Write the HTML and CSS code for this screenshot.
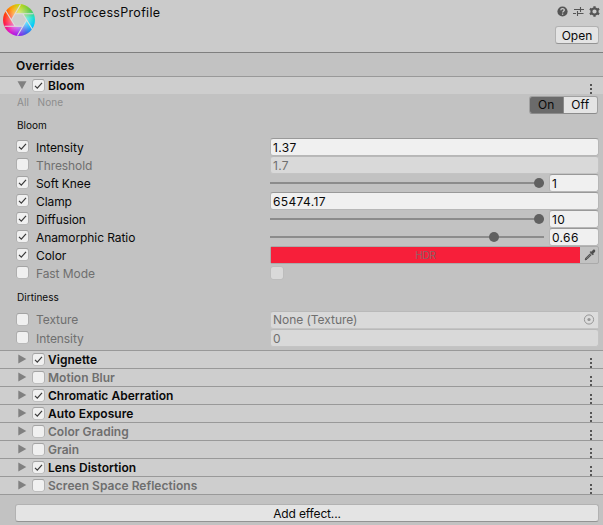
FILE: index.html
```html
<!DOCTYPE html>
<html lang="en">
<head>
<meta charset="utf-8">
<title>PostProcessProfile</title>
<link rel="stylesheet" href="styles.css">
</head>
<body>
<header class="asset">
  <svg class="logo" width="32" height="32" viewBox="0 0 32 32">
    <foreignObject width="32" height="32"><div class="wheel"></div></foreignObject>
    <path d="M12.2 9.7H19.8L23.6 16L19.8 22.3H12.2L8.4 16Z" fill="#cecece"/>
    <path d="M19.8 22.3H1.5M12.2 22.3L2.5 6.5M8.4 16L17.5 .5M12.2 9.7H30.5M19.8 9.7L29.5 25.5M23.6 16L14.5 31.5" stroke="#dedede" stroke-width="1.1"/>
  </svg>
  <h1 class="title">PostProcessProfile</h1>
  <div class="tools">
    <div class="icons">
      <svg width="11" height="11" viewBox="0 0 11 11"><circle cx="5.5" cy="5.5" r="5.1" fill="#555"/><path d="M3.8 4.2C3.8 2 7.3 2 7.3 4.1C7.3 5.3 5.6 5.2 5.6 6.6M5.6 7.5V8.8" fill="none" stroke="#cbcbcb" stroke-width="1.3"/></svg>
      <svg width="11" height="11" viewBox="0 0 11 11"><path d="M1 3.5H7M8 3.5H11M7.5 1V6M0 7.5H3M4 7.5H10.5M4.5 5V10" fill="none" stroke="#555" stroke-width="1.1"/></svg>
      <svg width="11" height="11" viewBox="0 0 11 11"><circle cx="5.5" cy="5.5" r="3.1" fill="none" stroke="#555" stroke-width="2"/><path d="M5.5 .2V2M5.5 9V10.8M.9 2.85L2.5 3.8M8.5 7.2L10.1 8.15M.9 8.15L2.5 7.2M8.5 3.8L10.1 2.85" stroke="#555" stroke-width="2.3"/></svg>
    </div>
    <button class="btn open">Open</button>
  </div>
</header>
<h2 class="overrides">Overrides</h2>
<section class="effect on">
  <svg class="arrow down" width="10" height="9" viewBox="0 0 10 9"><path d="M.5 .3H9.5L5 8.3Z"/></svg>
  <i class="check"><svg viewBox="0 0 11 11"><path d="M2 5.8L4.3 8.2L9 2.8"/></svg></i><span>Bloom</span><i class="dots"></i>
</section>
<main class="body">
  <div class="bar"><span class="link">All</span><span class="link">None</span><div class="seg"><b class="sel">On</b><b>Off</b></div></div>
  <h3 class="sub first">Bloom</h3>
  <div class="row"><i class="check"><svg viewBox="0 0 11 11"><path d="M2 5.8L4.3 8.2L9 2.8"/></svg></i><label>Intensity</label><div class="field">1.37</div></div>
  <div class="row off"><i class="check"></i><label>Threshold</label><div class="field">1.7</div></div>
  <div class="row"><i class="check"><svg viewBox="0 0 11 11"><path d="M2 5.8L4.3 8.2L9 2.8"/></svg></i><label>Soft Knee</label><div class="track"><i class="knob" style="left:264px"></i></div><div class="field num">1</div></div>
  <div class="row"><i class="check"><svg viewBox="0 0 11 11"><path d="M2 5.8L4.3 8.2L9 2.8"/></svg></i><label>Clamp</label><div class="field">65474.17</div></div>
  <div class="row"><i class="check"><svg viewBox="0 0 11 11"><path d="M2 5.8L4.3 8.2L9 2.8"/></svg></i><label>Diffusion</label><div class="track"><i class="knob" style="left:264px"></i></div><div class="field num">10</div></div>
  <div class="row"><i class="check"><svg viewBox="0 0 11 11"><path d="M2 5.8L4.3 8.2L9 2.8"/></svg></i><label>Anamorphic Ratio</label><div class="track"><i class="knob" style="left:219px"></i></div><div class="field num">0.66</div></div>
  <div class="row"><i class="check"><svg viewBox="0 0 11 11"><path d="M2 5.8L4.3 8.2L9 2.8"/></svg></i><label>Color</label><div class="color"><span class="hdr">HDR</span><svg width="12" height="12" viewBox="0 0 12 12"><path d="M7.2 2.8L9 .9C10.3-.2 12 1.4 10.9 2.9L9.2 4.7L9.8 5.4L8.8 6.3L5.6 3.1L6.5 2.2Z" fill="#4d4d4d"/><path d="M6.3 4.5L1.8 9L1.2 10.9L3 10.2L7.5 5.7" fill="#777" stroke="#4d4d4d"/></svg></div></div>
  <div class="row off"><i class="check"></i><label>Fast Mode</label><i class="check value"></i></div>
  <h3 class="sub second">Dirtiness</h3>
  <div class="row off up"><i class="check"></i><label>Texture</label><div class="field obj"><span>None (Texture)</span><svg width="18" height="16" viewBox="0 0 18 16"><path d="M0 0H18V16H0Z" fill="#dcdcdc"/><circle cx="9" cy="7.5" r="4.6" fill="none" stroke="#969696"/><circle cx="9" cy="7.5" r="1.6" fill="#969696"/></svg></div></div>
  <div class="row off"><i class="check"></i><label>Intensity</label><div class="field">0</div></div>
</main>
<section class="effect on"><svg class="arrow" width="9" height="10" viewBox="0 0 9 10"><path d="M.3 .5L8.3 5L.3 9.5Z"/></svg><i class="check"><svg viewBox="0 0 11 11"><path d="M2 5.8L4.3 8.2L9 2.8"/></svg></i><span>Vignette</span><i class="dots"></i></section>
<section class="effect"><svg class="arrow" width="9" height="10" viewBox="0 0 9 10"><path d="M.3 .5L8.3 5L.3 9.5Z"/></svg><i class="check"></i><span>Motion Blur</span><i class="dots"></i></section>
<section class="effect on"><svg class="arrow" width="9" height="10" viewBox="0 0 9 10"><path d="M.3 .5L8.3 5L.3 9.5Z"/></svg><i class="check"><svg viewBox="0 0 11 11"><path d="M2 5.8L4.3 8.2L9 2.8"/></svg></i><span>Chromatic Aberration</span><i class="dots"></i></section>
<section class="effect on"><svg class="arrow" width="9" height="10" viewBox="0 0 9 10"><path d="M.3 .5L8.3 5L.3 9.5Z"/></svg><i class="check"><svg viewBox="0 0 11 11"><path d="M2 5.8L4.3 8.2L9 2.8"/></svg></i><span>Auto Exposure</span><i class="dots"></i></section>
<section class="effect"><svg class="arrow" width="9" height="10" viewBox="0 0 9 10"><path d="M.3 .5L8.3 5L.3 9.5Z"/></svg><i class="check"></i><span>Color Grading</span><i class="dots"></i></section>
<section class="effect"><svg class="arrow" width="9" height="10" viewBox="0 0 9 10"><path d="M.3 .5L8.3 5L.3 9.5Z"/></svg><i class="check"></i><span>Grain</span><i class="dots"></i></section>
<section class="effect on"><svg class="arrow" width="9" height="10" viewBox="0 0 9 10"><path d="M.3 .5L8.3 5L.3 9.5Z"/></svg><i class="check"><svg viewBox="0 0 11 11"><path d="M2 5.8L4.3 8.2L9 2.8"/></svg></i><span>Lens Distortion</span><i class="dots"></i></section>
<section class="effect"><svg class="arrow" width="9" height="10" viewBox="0 0 9 10"><path d="M.3 .5L8.3 5L.3 9.5Z"/></svg><i class="check"></i><span>Screen Space Reflections</span><i class="dots"></i></section>
<footer class="foot"><button class="btn add">Add effect...</button></footer>
</body>
</html>
```
FILE: styles.css
```css
* { box-sizing: border-box; }
body {
  margin: 0;
  height: 525px;
  overflow: hidden;
  background: #c2c2c2;
  color: #090909;
  font: 12px/18px Inter, "Liberation Sans", sans-serif;
  letter-spacing: 0;
}
h1, h2, h3 { margin: 0; }
svg { display: block; flex: none; }

.asset {
  display: flex;
  height: 53px;
  padding: 4px 4px 0 3px;
  background: #cbcbcb;
  border-bottom: 1px solid #7f7f7f;
}
.wheel {
  width: 32px;
  height: 32px;
  border-radius: 50%;
  background: radial-gradient(circle, rgba(255,255,255,.5) 25%, transparent 65%),
    conic-gradient(#c5d916, #60c848 50deg, #20dfcf 80deg, #00c8ff 115deg, #4263e8 150deg, #9e20ed 185deg, #e019c5 220deg, #ff1a4d 255deg, #ff3c10 290deg, #ff9700 325deg, #c5d916);
}
.title { margin: 0 0 0 8px; font-size: 12.5px; font-weight: 400; line-height: 18px; letter-spacing: .32px; }
.tools { margin-left: auto; }
.icons { display: flex; gap: 5px; justify-content: flex-end; padding: 2px 0 0 0; margin-right: -1px; }
.btn {
  display: block;
  height: 18px;
  padding: 0;
  border: 1px solid #b2b2b2;
  border-bottom-color: #939393;
  border-radius: 3px;
  background: #e4e4e4;
  color: #090909;
  font: inherit;
  line-height: 17px;
  letter-spacing: -.15px;
  text-align: center;
}
.open { width: 44px; margin-top: 9px; letter-spacing: 0; }
.overrides { height: 23px; padding: 4px 0 0 16px; font-size: 12px; font-weight: 600; line-height: 18px; letter-spacing: .15px; }

.effect {
  display: flex;
  height: 18px;
  padding-left: 17px;
  border-top: 1px solid #999;
  background: #cecece;
  color: #6f6f6f;
  font-weight: 600;
  letter-spacing: .03px;
}
.effect.on { color: #090909; }
.effect .check { margin: 3px 5px 0 6px; }
.arrow { margin: 3px 0 0 1px; fill: #808080; }
.effect .arrow + .check { margin-right: 4px; }
.arrow.down { margin: 4px -1px 0 0; }
.effect .arrow.down + .check { margin-left: 6.5px; margin-right: 4.5px; }
.dots {
  width: 2px;
  height: 10px;
  margin: 7px 11px 0 auto;
  background: repeating-linear-gradient(#555 0 2px, transparent 2px 4px);
}
.check {
  flex: none;
  width: 11px;
  height: 11px;
  border-radius: 2px;
  background: #f0f0f0;
  box-shadow: 0 0 0 .5px #b0b0b0, 0 -.5px 0 .5px #999;
}
.check path { fill: none; stroke: #3a3a3a; stroke-width: 1.2; }

.body { height: 256px; padding: 0 4px 0 17px; }
.bar { display: flex; height: 23px; font-size: 10px; line-height: 17px; color: #8d8d8d; letter-spacing: .1px; }
.link { margin-right: 8.5px; }
.seg {
  display: flex;
  width: 69px;
  height: 18px;
  margin: 2px 1px 0 auto;
  border: 1px solid #a0a0a0;
  border-bottom-color: #8b8b8b;
  border-radius: 3px;
  overflow: hidden;
  color: #090909;
  font-size: 12px;
  line-height: 16px;
  text-align: center;
}
.seg b { width: 34px; font-weight: 400; background: #e4e4e4; }
.seg .sel { background: #6b6b6b; border-right: 1px solid #8b8b8b; }
.sub { font-size: 10px; font-weight: 400; line-height: 18px; letter-spacing: .03px; }
.first { height: 21px; line-height: 17px; }
.second { height: 29px; padding-top: 6px; }
.row { display: flex; height: 18px; }
.row > .check { margin: 3px 8px 0 0; }
.row label { width: 234px; padding-top: 1px; flex: none; letter-spacing: -.08px; }
.row.off { color: #6f6f6f; }
.row.up label { padding-top: 0; }
.field {
  flex: 1;
  height: 18px;
  padding-left: 2px;
  border: 1px solid #b7b7b7;
  border-top-color: #999;
  border-radius: 3px;
  background: #f0f0f0;
  line-height: 18px;
  letter-spacing: .35px;
}
.off .field { background: #d9d9d9; border-color: #c4c4c4; border-top-color: #b9b9b9; }
.off .field.obj { letter-spacing: -.04px; line-height: 16px; }
.field.num { flex: 0 0 50px; margin-left: 5px; }
.track { position: relative; flex: none; width: 274px; height: 2px; margin-top: 8px; background: #8c8c8c; }
.knob { position: absolute; top: -4px; width: 10px; height: 10px; border-radius: 50%; background: #616161; }
.color {
  display: flex;
  flex: 1;
  border: 1px solid #aaa;
  border-radius: 2px;
}
.hdr { flex: 1; background: #f71f3a; color: #8a6266; font-size: 10px; line-height: 17px; text-align: center; letter-spacing: -.2px; }
.color svg { margin: 2px 2px 0 4px; }
.row > .check.value { width: 12px; height: 12px; margin: 3px 0 0 1px; background: #d9d9d9; box-shadow: 0 0 0 .5px #b7b7b7; }
.obj { display: flex; justify-content: space-between; }

.foot { height: 31px; padding: 9px 4px 0 15px; border-top: 1px solid #999; }
.add { width: 100%; }
```
